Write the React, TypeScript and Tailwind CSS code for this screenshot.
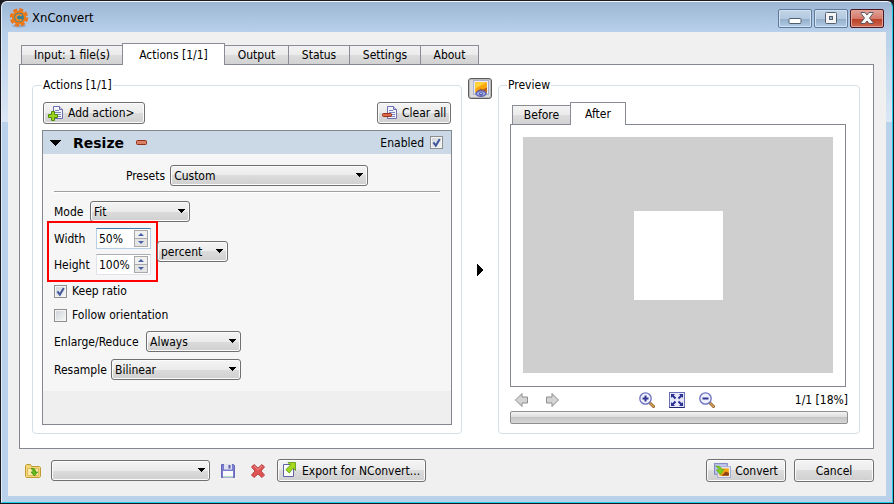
import { useState } from 'react';
import type { ReactNode } from 'react';
import clsx from 'clsx';

const TABS = [
  { name: 'Input: 1 file(s)', width: 'w-[101px]' },
  { name: 'Actions [1/1]', width: 'w-[103px]' },
  { name: 'Output', width: 'w-[64px]' },
  { name: 'Status', width: 'w-[61px]' },
  { name: 'Settings', width: 'w-[71px]' },
  { name: 'About', width: 'w-[58px]' },
];

const BTN =
  'flex items-center gap-1 rounded-[3px] border border-[#707070] bg-[linear-gradient(#f4f4f4,#ebebeb_50%,#dcdcdc_50%,#cfcfcf)] whitespace-nowrap shadow-[inset_0_0_0_1px_#fbfbfb]';

function Select({ id, options, className, label }: { id: string; options: string[]; className: string; label?: string }) {
  return (
    <div className={clsx('relative shrink-0', className)}>
      <select
        id={id}
        aria-label={label}
        className="block h-[21px] w-full appearance-none rounded-[3px] border border-[#707070] bg-[linear-gradient(#f4f4f4,#ebebeb_50%,#dcdcdc_50%,#cfcfcf)] pl-[3px] shadow-[inset_0_0_0_1px_#fbfbfb] outline-none"
      >
        {options.map((o) => (
          <option key={o}>{o}</option>
        ))}
      </select>
      <svg viewBox="0 0 8 4" className="pointer-events-none absolute top-2 right-[5px] h-1 w-2" shapeRendering="crispEdges">
        <path d="M0 0h8L4 4z" />
      </svg>
    </div>
  );
}

function Check({ id, defaultChecked }: { id: string; defaultChecked?: boolean }) {
  return (
    <span className="relative block h-[13px] w-[13px] shrink-0">
      <input
        id={id}
        type="checkbox"
        defaultChecked={defaultChecked}
        className="peer block h-[13px] w-[13px] appearance-none border border-[#8e8f8f] bg-[linear-gradient(135deg,#cdd2d8,#f8f8f8)] shadow-[inset_0_0_0_1px_#f4f4f4]"
      />
      <svg viewBox="0 0 13 13" className="pointer-events-none absolute inset-0 hidden peer-checked:block">
        <path d="M3.4 6.4l2.4 3.2L9.8 3" fill="none" stroke="#41589c" strokeWidth="2" />
      </svg>
    </span>
  );
}

function Spin({ id, value, focused }: { id: string; value: string; focused?: boolean }) {
  const [text, setText] = useState(value);
  const step = (d: number) => setText(`${Math.max(1, parseInt(text, 10) + d)}%`);

  return (
    <div
      className={clsx(
        'flex h-[21px] w-[55px] items-center border bg-white pr-px',
        focused ? 'border-[#b5cfe7] border-t-[#3d7bad]' : 'border-[#e2e3ea] border-t-[#abadb3]'
      )}
    >
      <input
        id={id}
        value={text}
        onChange={(e) => setText(e.target.value)}
        className="w-[37px] bg-transparent pl-0.5 outline-none"
      />
      <span className="flex flex-col">
        <button
          type="button"
          aria-label="Increase"
          onClick={() => step(1)}
          className="flex h-[9px] w-3.5 items-center justify-center border border-[#a9a9a9] bg-[#f0f0f0]"
        >
          <svg viewBox="0 0 6 3" className="h-[3px] w-1.5">
            <path d="M0 3h6L3 0z" fill="#4a62a5" />
          </svg>
        </button>
        <button
          type="button"
          aria-label="Decrease"
          onClick={() => step(-1)}
          className="flex h-2 w-3.5 items-center justify-center border border-t-0 border-[#a9a9a9] bg-[#e4e4e4]"
        >
          <svg viewBox="0 0 6 3" className="h-[3px] w-1.5">
            <path d="M0 0h6L3 3z" fill="#4a62a5" />
          </svg>
        </button>
      </span>
    </div>
  );
}

function Icon({ children, className = 'h-4 w-4' }: { children: ReactNode; className?: string }) {
  return (
    <svg viewBox="0 0 16 16" className={clsx('shrink-0', className)} aria-hidden="true">
      {children}
    </svg>
  );
}

function AppLogo() {
  return (
    <svg viewBox="0 0 20 20" className="h-5 w-5" aria-hidden="true">
      <ellipse cx="10" cy="18" rx="7" ry="1.5" fill="#6f88a3" opacity=".5" />
      <circle cx="10" cy="9.5" r="7.6" fill="none" stroke="#e8741c" strokeWidth="3.2" strokeDasharray="3.9 2.07" />
      <circle cx="10" cy="9.5" r="7" fill="#f07c14" />
      <circle cx="10" cy="9.5" r="4.8" fill="#2d8298" />
      <path d="M12.6 8a3 3 0 1 0 0 3.2" fill="none" stroke="#f58a2a" strokeWidth="2" />
    </svg>
  );
}

function Page() {
  return (
    <>
      <path d="M5.5 1.5h6l3 3v9h-9z" fill="#f2f3fb" stroke="#6d6fb0" />
      <path d="M11.5 1.5v3h3" fill="#c9cbe8" stroke="#6d6fb0" />
      <path d="M7 5.5h4M7 7.5h6M7 9.5h6M7 11.5h6" stroke="#7d83bd" />
    </>
  );
}

function AddIcon() {
  return (
    <Icon>
      <Page />
      <path d="M3.5 6.5h3v3h3v3h-3v3h-3v-3h-3v-3h3z" fill="#9bd31a" stroke="#4c8a0c" />
    </Icon>
  );
}

function ClearIcon() {
  return (
    <Icon>
      <Page />
      <rect x=".5" y="8.5" width="9" height="3" rx="1" fill="#d9694a" stroke="#9a2f1a" />
    </Icon>
  );
}

function PictureIcon() {
  return (
    <Icon className="h-[17px] w-[17px]">
      <rect x="1.5" y=".5" width="14" height="13" fill="#f3f4fa" stroke="#a9aed0" />
      <rect x="3" y="2" width="11" height="10" fill="#fba70c" />
      <path d="M3 2h11L3 8z" fill="#ffd53a" />
      <path d="M3 12l5-4 2 1 4-2v5z" fill="#b5611c" />
      <path d="M3.5 13c2-4 8-4 10 0-2 3.300-8 3.300-10 0z" fill="#a4aae6" stroke="#5a60ac" />
      <circle cx="8.500" cy="13" r="1.800" fill="#4a50a8" />
      <circle cx="8.500" cy="12.800" r=".7" fill="#fff" />
    </Icon>
  );
}

function FolderIcon() {
  return (
    <Icon>
      <path d="M.5 13.5v-11l1-1h4l1 2h8l1 1v9l-1 1h-13z" fill="#f4d777" stroke="#c09a35" />
      <path d="M2.5 5.5h11v7h-11z" fill="#fbe9a4" stroke="#dcb95c" />
      <path d="M6 5.5c3-.6 4.600.6 4.600 3.500h2L9.400 13 6 9h2c0-1.800-.6-2.600-2-3.500z" fill="#63ba1c" stroke="#3d8a12" strokeWidth=".7" />
    </Icon>
  );
}

function SaveIcon() {
  return (
    <Icon>
      <path d="M1.500 1.500h12l1 1v12h-13z" fill="#7c7fd0" stroke="#6468b8" />
      <rect x="4" y="1" width="8" height="5.500" fill="#dfe1ee" />
      <rect x="8.500" y="2" width="2" height="3.500" fill="#5a5ea8" />
      <rect x="3" y="8" width="10" height="6.500" fill="#fafafa" />
      <path d="M3 13.500h10" stroke="#b4dfc0" />
    </Icon>
  );
}

function DeleteIcon() {
  return (
    <Icon>
      <path
        d="M4 1.500L8 5l4-3.500L14.500 4 11 8l3.500 4-2.500 2.500L8 11l-4 3.500L1.500 12 5 8 1.500 4z"
        fill="#dd5555"
        stroke="#b94444"
        strokeLinejoin="round"
      />
      <path d="M4 3l4 3.500L12 3" fill="none" stroke="#f09090" />
    </Icon>
  );
}

function ExportIcon() {
  return (
    <Icon className="-mt-0.5 h-4 w-4">
      <path d="M1.500 2.500h10v12h-10z" fill="#fbfbfe" stroke="#5f62a4" />
      <path d="M6 .500h7.500v8l-2.400-2.400-3.800 4.900-3.500-3.300 4.700-4.700z" fill="#a3d81c" stroke="#559410" strokeWidth=".8" />
    </Icon>
  );
}

function ConvertIcon() {
  return (
    <Icon className="h-[17px] w-[17px]">
      <rect x=".5" y="1.500" width="12" height="10" fill="#c3c8ee" stroke="#8388c0" />
      <rect x="3.500" y="4.500" width="12" height="10" fill="#f7f7fc" stroke="#a5a9d0" />
      <rect x="5" y="6" width="9" height="7" fill="#f9a414" />
      <path d="M7 13l4-4 3 1v3z" fill="#8f4413" />
      <path d="M1.500 4c3-.8 5.500.5 5.500 3h2.500L6 12 2 7.500h2.500C4.500 6 3.500 5 1.500 4z" fill="#7fce22" stroke="#5aa81c" strokeWidth=".6" />
    </Icon>
  );
}

function ArrowIcon({ right }: { right?: boolean }) {
  return (
    <Icon className={clsx('h-4 w-4', right && 'rotate-180')}>
      <path d="M1.500 8L8 1.500V5h5.500v6H8v3.500z" fill="#d3d3d3" stroke="#8f8f8f" />
    </Icon>
  );
}

function ZoomIcon({ plus }: { plus?: boolean }) {
  return (
    <Icon>
      <path d="M10 10l4.500 4.500" stroke="#8a5a28" strokeWidth="3" strokeLinecap="round" />
      <path d="M10.500 10.500l4 4" stroke="#dca65c" strokeWidth="1.500" strokeLinecap="round" />
      <circle cx="6.500" cy="6.500" r="5.700" fill="#eef0fd" stroke="#6a6fbe" strokeWidth="1.300" />
      <path d={plus ? 'M3.500 6.500h6M6.500 3.500v6' : 'M3.500 6.500h6'} stroke="#2f3590" strokeWidth="2" />
    </Icon>
  );
}

function FitIcon() {
  return (
    <Icon>
      <rect x=".5" y=".5" width="15" height="15" fill="#e6e8fa" stroke="#6a6fb8" />
      <path d="M.5 15.500h15" stroke="#23286e" />
      <path d="M2 2h4L2 6zM14 2v4l-4-4zM2 14v-4l4 4zM14 14h-4l4-4z" fill="#2b3194" />
      <path d="M3.500 3.500l3 3M12.500 3.500l-3 3M3.500 12.500l3-3M12.500 12.500l-3-3" stroke="#2b3194" strokeWidth="2" />
    </Icon>
  );
}

function TitleBar() {
  const button =
    'flex h-[19px] w-[34px] items-center justify-center rounded-[2px] border border-[#5f7a9b] bg-[linear-gradient(#c3d5e8,#b3c9df_50%,#93adc9_50%,#b0cbe5)] shadow-[inset_0_0_0_1px_#d3e2f1]';
  return (
    <header className="flex h-[30px] items-center pt-1 pr-0.5 pb-0.5 pl-[7px]">
      <AppLogo />
      <h1 className="ml-[3px] flex-1 text-[13px]">XnConvert</h1>
      <div className="mr-1.5 flex gap-0.5">
        <button type="button" aria-label="Minimize" className={button}>
          <svg viewBox="0 0 14 12" className="h-3 w-3.5">
            <rect x="1" y="6.500" width="12" height="5" rx="1" fill="#fff" stroke="#53606f" />
          </svg>
        </button>
        <button type="button" aria-label="Maximize" className={button}>
          <svg viewBox="0 0 14 12" className="h-3 w-3.5">
            <rect x="1.500" y=".5" width="11" height="11" rx="1" fill="#f4f4f4" stroke="#53606f" />
            <rect x="5.500" y="4.500" width="3" height="3" fill="#a3bbd4" stroke="#53606f" />
          </svg>
        </button>
        <button
          type="button"
          aria-label="Close"
          className="flex h-[19px] w-[34px] items-center justify-center rounded-[2px] border border-[#4d1820] bg-[linear-gradient(#e3a399,#d4796b_50%,#b83c24_50%,#cf6850)] shadow-[inset_0_0_0_1px_#e0a196]"
        >
          <svg viewBox="0 0 14 12" className="h-3 w-3.5">
            <path
              d="M1 .5h4L7 3 9 .5h4v1L9.500 6l3.500 4.500v1H9L7 9l-2 2.500H1v-1L4.500 6 1 1.500z"
              fill="#f6f6f6"
              stroke="#5d5660"
              strokeLinejoin="round"
            />
          </svg>
        </button>
      </div>
    </header>
  );
}

function ActionsGroup() {
  return (
    <fieldset className="flex min-w-0 flex-col rounded-[4px] border border-[#d5dfe5] px-[9px] pb-2">
      <legend className="px-px leading-4">Actions [1/1]</legend>
      <div className="flex justify-between px-px pt-[9px]">
        <button type="button" className={clsx(BTN, 'h-[22px] w-[102px] pl-1')}>
          <AddIcon />
          Add action&gt;
        </button>
        <button type="button" className={clsx(BTN, 'h-[22px] w-[74px] pl-1')}>
          <ClearIcon />
          Clear all
        </button>
      </div>

      <div className="mt-1.5 flex flex-1 flex-col border border-[#828790] bg-[#efefef]">
        <div className="flex h-[23px] items-center bg-[#cbd9e6] pr-2 pl-1.5">
          <svg viewBox="0 0 12 6" className="h-1.5 w-3" shapeRendering="crispEdges">
            <path d="M0 0h12L6 6z" />
          </svg>
          <h2 className="ml-3 w-[51px] font-['DejaVu_Sans',sans-serif] text-[14px] font-bold">Resize</h2>
          <button type="button" aria-label="Remove action" className="ml-3">
            <svg viewBox="0 0 11 5" className="h-[5px] w-[11px]">
              <rect x=".5" y=".5" width="10" height="4" rx="1" fill="#d98066" stroke="#8e2f1c" />
            </svg>
          </button>
          <label htmlFor="enabled" className="ml-auto pr-1.5">
            Enabled
          </label>
          <Check id="enabled" defaultChecked />
        </div>

        <div className="bg-[#f6f6f6] px-[11px] py-[11px]">
          <div className="flex items-center justify-center gap-[5px]">
            <label htmlFor="presets">Presets</label>
            <Select id="presets" className="w-[198px]" options={['Custom']} />
          </div>
          <hr className="mt-[5px] h-0.5 border-t border-b border-t-[#a0a0a0] border-b-white" />
          <div className="mt-2 flex w-[136px] items-center justify-between">
            <label htmlFor="mode">Mode</label>
            <Select id="mode" className="w-[100px]" options={['Fit', 'Fill', 'Stretch']} />
          </div>

          <div className="mt-1.5 flex items-center gap-1.5">
            <div className="relative flex flex-col gap-[5px]">
              <div className="flex items-center">
                <label htmlFor="width" className="w-[42px]">
                  Width
                </label>
                <Spin id="width" value="50%" focused />
              </div>
              <div className="flex items-center">
                <label htmlFor="height" className="w-[42px]">
                  Height
                </label>
                <Spin id="height" value="100%" />
              </div>
              <div className="pointer-events-none absolute -inset-[7px] border-2 border-[#ff0000]" />
            </div>
            <Select id="unit" label="Unit" className="w-[71px]" options={['percent', 'pixels']} />
          </div>

          <div className="mt-2 flex h-4 items-center gap-[5px]">
            <Check id="ratio" defaultChecked />
            <label htmlFor="ratio">Keep ratio</label>
          </div>
          <div className="mt-2 flex h-4 items-center gap-[5px]">
            <Check id="orientation" />
            <label htmlFor="orientation">Follow orientation</label>
          </div>
          <div className="mt-2 flex w-[187px] items-center justify-between">
            <label htmlFor="enlarge">Enlarge/Reduce</label>
            <Select id="enlarge" className="w-[95px]" options={['Always', 'Enlarge only', 'Reduce only']} />
          </div>
          <div className="mt-[7px] flex w-[187px] items-center justify-between">
            <label htmlFor="resample">Resample</label>
            <Select id="resample" className="w-[130px]" options={['Bilinear', 'Bicubic', 'Lanczos']} />
          </div>
        </div>
      </div>
    </fieldset>
  );
}

function PreviewGroup() {
  return (
    <fieldset className="flex min-w-0 flex-col rounded-[4px] border border-[#d5dfe5] px-[11px] pb-[9px]">
      <legend className="-ml-[3px] px-px leading-4">Preview</legend>
      <div className="flex items-end pt-[9px] pl-0.5">
        <button
          type="button"
          className="h-[19px] w-[58px] border border-r-0 border-b-0 border-[#898c95] bg-[linear-gradient(#f2f2f2,#ebebeb_50%,#dddddd_50%,#d2d2d2)]"
        >
          Before
        </button>
        <button
          type="button"
          className="relative -mb-px h-[23px] w-14 border border-b-0 border-[#898c95] bg-white"
        >
          After
        </button>
      </div>
      <div className="mr-0.5 flex flex-1 border border-[#828790] px-3 pt-3 pb-[13px]">
        <div className="flex flex-1 items-center justify-center bg-[#cfcfcf]">
          <div className="h-[89px] w-[89px] bg-white" />
        </div>
      </div>
      <div className="mt-1 grid h-[18px] grid-cols-[1fr_auto_1fr] items-center">
        <div className="flex gap-3.5 pl-1">
          <button type="button" aria-label="Previous">
            <ArrowIcon />
          </button>
          <button type="button" aria-label="Next">
            <ArrowIcon right />
          </button>
        </div>
        <div className="flex gap-3.5 pr-1">
          <button type="button" aria-label="Zoom in">
            <ZoomIcon plus />
          </button>
          <button type="button" aria-label="Fit">
            <FitIcon />
          </button>
          <button type="button" aria-label="Zoom out">
            <ZoomIcon />
          </button>
        </div>
        <span className="text-right">1/1 [18%]</span>
      </div>
      <div
        role="progressbar"
        aria-label="Progress"
        className="mt-0.5 h-[13px] rounded-[2px] border border-[#8f8f8f] bg-[linear-gradient(#f2f2f2,#dedede_45%,#c6c6c6_50%,#d6d6d6)]"
      />
    </fieldset>
  );
}

export default function App() {
  const [tab, setTab] = useState(1);

  return (
    <div className="flex min-h-screen bg-[#1b1a20] p-px font-['DejaVu_Sans_Condensed','DejaVu_Sans',sans-serif] text-[12px] leading-4 text-black">
      <div className="flex min-w-0 flex-1 flex-col rounded-t-[6px] border border-t-[#f3f7fb] border-r-[#1fcbe6] border-b-[#1fcbe6] border-l-[#e4edf6] bg-[linear-gradient(#9cb6d4,#b8d0ea_30px,#dbe7f5_120px,#b9d1ea_120px)]">
        <TitleBar />
        <main className="mx-1.5 mb-1.5 flex flex-1 flex-col bg-[#f0f0f0]">
          <nav className="flex items-end pt-[11px] pl-[13px]">
            {TABS.map((t, i) => (
              <button
                key={t.name}
                type="button"
                onClick={() => setTab(i)}
                className={clsx(
                  'border border-b-0 border-[#898c95] whitespace-nowrap',
                  t.width,
                  i === tab
                    ? 'relative -mb-px h-[22px] bg-white'
                    : 'h-[19px] bg-[linear-gradient(#f2f2f2,#ebebeb_50%,#dddddd_50%,#d2d2d2)]',
                  i < tab && 'border-r-0',
                  i > tab && 'border-l-0'
                )}
              >
                {t.name}
              </button>
            ))}
          </nav>
          <section className="mr-3 ml-[11px] grid flex-1 grid-cols-[430fr_36px_362fr] border border-[#828790] bg-white pt-3 pr-[13px] pb-3.5 pl-3">
            <ActionsGroup />
            <div className="flex flex-col items-center pt-px">
              <button
                type="button"
                aria-label="Toggle preview"
                className="flex h-[21px] w-6 items-center justify-center rounded-[3px] border border-[#5c5c5c] bg-[#dadada] shadow-[inset_0_0_0_1px_#b8b8b8]"
              >
                <PictureIcon />
              </button>
              <button type="button" aria-label="Collapse" className="mt-1.5 flex flex-1 items-center">
                <svg viewBox="0 0 6 12" className="h-3 w-1.5" shapeRendering="crispEdges">
                  <path d="M0 0v12l6-6z" />
                </svg>
              </button>
            </div>
            <PreviewGroup />
          </section>

          <footer className="flex items-center pt-2.5 pr-3 pb-3.5 pl-[17px]">
            <button type="button" aria-label="Open script">
              <FolderIcon />
            </button>
            <Select id="script" label="Script" className="ml-2.5 w-[159px]" options={['']} />
            <button type="button" aria-label="Save script" className="ml-2.5">
              <SaveIcon />
            </button>
            <button type="button" aria-label="Delete script" className="ml-3.5">
              <DeleteIcon />
            </button>
            <button type="button" className={clsx(BTN, 'ml-[11px] h-[23px] w-[149px] pl-1')}>
              <ExportIcon />
              Export for NConvert...
            </button>
            <button type="button" className={clsx(BTN, 'ml-auto h-[23px] w-20 justify-center')}>
              <ConvertIcon />
              Convert
            </button>
            <button type="button" className={clsx(BTN, 'ml-2 h-[23px] w-20 justify-center')}>
              Cancel
            </button>
          </footer>
        </main>
      </div>
    </div>
  );
}
